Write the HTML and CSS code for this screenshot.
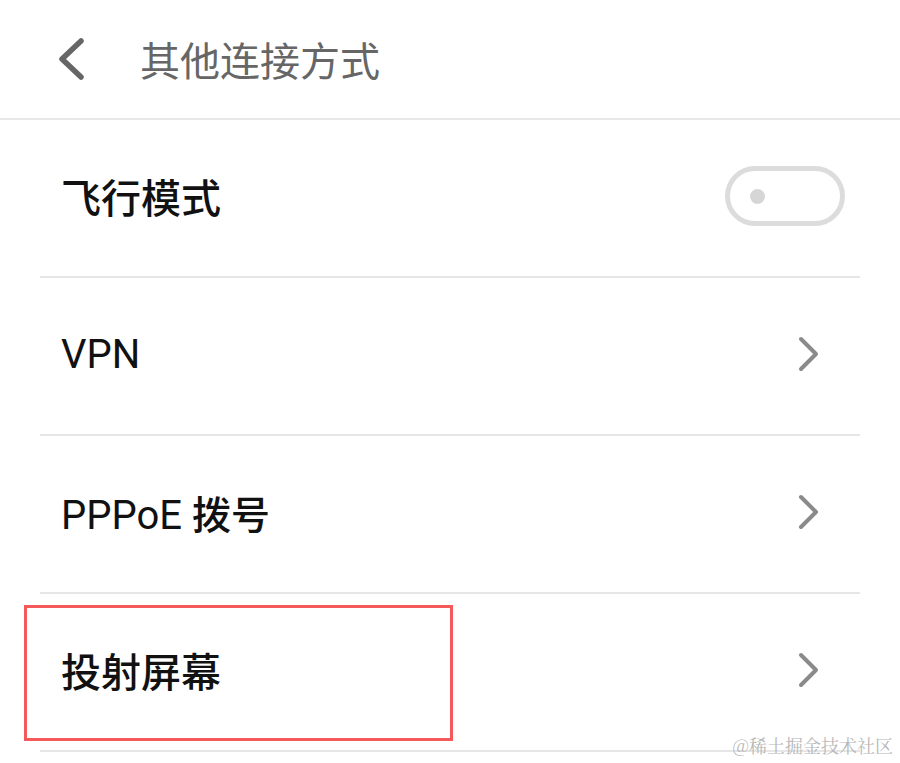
FILE: index.html
```html
<!DOCTYPE html>
<html lang="zh-CN">
  <head>
    <meta charset="UTF-8" />
    <meta name="viewport" content="width=device-width, initial-scale=1.0" />
    <title>其他连接方式</title>
    <link rel="stylesheet" href="styles.css">
  </head>
  <body>
    <div class="page">
      <!-- 顶部标题栏 -->
      <div class="header">
        <svg class="back" width="32" height="44" viewBox="0 0 32 44">
          <path d="M27 4 L8 22 L27 40" fill="none" stroke="#666" stroke-width="5.5" stroke-linecap="round" stroke-linejoin="round" />
        </svg>
        <div class="title">其他连接方式</div>
      </div>

      <div class="list">
        <div class="row">
          <div class="label">飞行模式</div>
          <div class="switch"><span class="knob"></span></div>
        </div>
        <div class="row">
          <div class="label latin">VPN</div>
          <svg class="arrow" width="22" height="36" viewBox="0 0 22 36">
            <path d="M3 3 L18 18 L3 33" fill="none" stroke="#8a8a8a" stroke-width="4" stroke-linecap="round" stroke-linejoin="round" />
          </svg>
        </div>
        <div class="row">
          <div class="label latin">PPPoE <span class="cjk">拨号</span></div>
          <svg class="arrow" width="22" height="36" viewBox="0 0 22 36">
            <path d="M3 3 L18 18 L3 33" fill="none" stroke="#8a8a8a" stroke-width="4" stroke-linecap="round" stroke-linejoin="round" />
          </svg>
        </div>
        <div class="row">
          <div class="label">投射屏幕</div>
          <svg class="arrow" width="22" height="36" viewBox="0 0 22 36">
            <path d="M3 3 L18 18 L3 33" fill="none" stroke="#8a8a8a" stroke-width="4" stroke-linecap="round" stroke-linejoin="round" />
          </svg>
        </div>
      </div>

      <!-- 红框标注 -->
      <div class="mark"></div>
      <div class="watermark">@稀土掘金技术社区</div>
    </div>
  </body>
</html>
```

FILE: styles.css
```css
* {
  margin: 0;
  padding: 0;
  box-sizing: border-box;
}
body {
  background: #fff;
  font-family: "Noto Sans CJK SC", "Noto Sans", sans-serif;
  overflow: hidden;
}
.page {
  position: relative;
  width: 900px;
  height: 763px;
}
.header {
  display: flex;
  align-items: center;
  height: 120px;
  padding: 0 0 0 54px;
  border-bottom: 2px solid #e8e8e8;
}
.back {
  display: block;
}
.title {
  margin-left: 54px;
  font-size: 40px;
  color: #666;
}
.list {
  padding: 0 40px;
}
.row {
  display: flex;
  align-items: center;
  justify-content: space-between;
  height: 158px;
  padding: 0 40px 4px 21px;
  border-bottom: 2px solid #e6e6e6;
}
.label {
  font-size: 40px;
  font-weight: 500;
  color: #111;
}
.latin {
  font-family: Roboto, "Noto Sans CJK SC", sans-serif;
  font-weight: 400;
}
.cjk {
  font-family: "Noto Sans CJK SC", sans-serif;
  font-weight: 500;
  font-size: 39px;
}
.switch {
  display: flex;
  align-items: center;
  width: 120px;
  height: 60px;
  margin-right: -25px;
  padding-left: 20px;
  border: 5px solid #dcdcdc;
  border-radius: 30px;
}
.knob {
  width: 15px;
  height: 15px;
  border-radius: 50%;
  background: #d6d6d6;
}
.arrow {
  display: block;
}
.mark {
  position: absolute;
  left: 24px;
  top: 605px;
  width: 429px;
  height: 136px;
  border: 3px solid #f45a5a;
}
.watermark {
  position: absolute;
  right: 7px;
  bottom: 5px;
  font-family: "Noto Serif CJK SC", "Noto Sans CJK SC", serif;
  font-size: 18px;
  color: #b8b8b8;
}
```
